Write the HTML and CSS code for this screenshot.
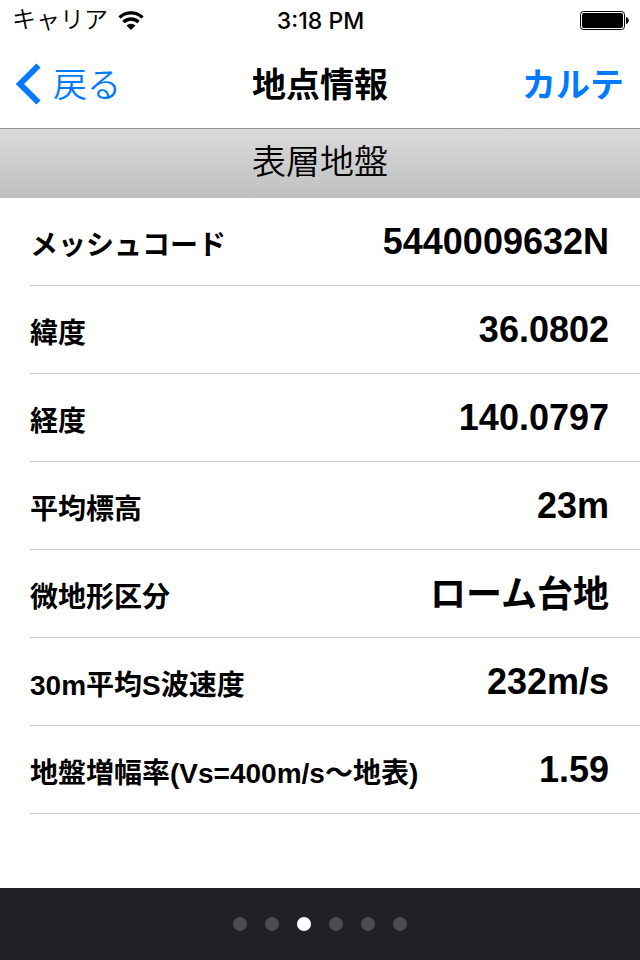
FILE: index.html
```
<!DOCTYPE html>
<html lang="ja">
<head>
  <meta charset="UTF-8">
  <meta name="viewport" content="width=device-width, initial-scale=1">
  <title>地点情報</title>
  <link rel="stylesheet" href="styles.css">
</head>
<body>
  <header class="top">
    <div class="status-bar">
      <div class="carrier">
        <span>キャリア</span>
        <svg class="wifi" viewBox="0 0 26 19" aria-hidden="true">
          <path d="M1.500 6.500a16.500 16.500 0 0 1 23 0M5.500 11a10.800 10.800 0 0 1 15 0" fill="none" stroke="#000" stroke-width="3.400"/>
          <path d="M8.500 14.500a6.400 6.400 0 0 1 9 0L13 19z"/>
        </svg>
      </div>
      <div class="time">3:18 PM</div>
      <svg class="battery" viewBox="0 0 49 19" aria-hidden="true">
        <rect x="0.500" y="0.500" width="44" height="18" rx="3" fill="none" stroke="#000"/>
        <rect x="2" y="2" width="41" height="15" rx="2"/>
        <path d="M46 6a3.600 3.600 0 0 1 0 7z"/>
      </svg>
    </div>
    <nav class="nav-bar">
      <a class="back" href="#">
        <svg class="chevron" viewBox="0 0 25 42" aria-hidden="true">
          <path d="M22.500 2.500L4 21l18.500 18.500" fill="none" stroke="#007aff" stroke-width="6"/>
        </svg>
        <span class="nav-text">戻る</span>
      </a>
      <h1 class="nav-text">地点情報</h1>
      <button class="karte nav-text" type="button">カルテ</button>
    </nav>
  </header>

  <main>
    <h2>表層地盤</h2>
    <dl class="list">
      <div class="row"><dt>メッシュコード</dt><dd>5440009632N</dd></div>
      <div class="row"><dt>緯度</dt><dd>36.0802</dd></div>
      <div class="row"><dt>経度</dt><dd>140.0797</dd></div>
      <div class="row"><dt>平均標高</dt><dd>23m</dd></div>
      <div class="row"><dt>微地形区分</dt><dd class="ja">ローム台地</dd></div>
      <div class="row"><dt>30m平均S波速度</dt><dd>232m/s</dd></div>
      <div class="row"><dt>地盤増幅率(Vs=400m/s〜地表)</dt><dd>1.59</dd></div>
    </dl>
  </main>

  <footer class="pager">
    <span class="dot"></span>
    <span class="dot"></span>
    <span class="dot active"></span>
    <span class="dot"></span>
    <span class="dot"></span>
    <span class="dot"></span>
  </footer>
</body>
</html>
```
FILE: styles.css
```
* {
  box-sizing: border-box;
}
body {
  margin: 0;
  min-height: 100vh;
  display: flex;
  flex-direction: column;
  background: #fff;
  color: #000;
  font-family: "Liberation Sans", "Noto Sans CJK JP", sans-serif;
}
h1, h2, dl, dd {
  margin: 0;
}
.top {
  border-bottom: 1px solid #979797;
}
.status-bar {
  display: grid;
  grid-template-columns: 1fr auto 1fr;
  align-items: center;
  height: 40px;
  padding: 0 11px 0 12px;
}
.carrier {
  display: flex;
  align-items: center;
  gap: 10px;
  font-size: 24px;
  font-weight: 350;
  line-height: 36px;
}
.wifi {
  width: 26px;
  height: 19px;
}
.time {
  padding-top: 2px;
  font-family: Inter, sans-serif;
  font-size: 23px;
  font-weight: 500;
}
.battery {
  justify-self: end;
  width: 49px;
  height: 19px;
}
.nav-bar {
  display: grid;
  grid-template-columns: 1fr auto 1fr;
  align-items: center;
  height: 88px;
  padding: 0 16px;
}
.nav-text {
  padding: 0 0 4px;
}
.back {
  display: flex;
  align-items: center;
  gap: 12px;
  color: #007aff;
  font-size: 34px;
  font-weight: 350;
  text-decoration: none;
}
.chevron {
  width: 25px;
  height: 42px;
}
h1 {
  font-size: 34px;
  font-weight: 600;
}
.karte {
  justify-self: end;
  border: none;
  background: none;
  color: #007aff;
  font: inherit;
  font-size: 34px;
  font-weight: 600;
  cursor: pointer;
}
main {
  flex: 1;
}
h2 {
  height: 69px;
  background: linear-gradient(#dadada, #c0c0c0);
  font-size: 34px;
  font-weight: 350;
  line-height: 66px;
  text-align: center;
}
.list {
  padding-left: 30px;
}
.row {
  display: flex;
  justify-content: space-between;
  align-items: center;
  height: 88px;
  padding-right: 31px;
  border-bottom: 1px solid #c8c7cc;
  white-space: nowrap;
}
dt {
  padding-top: 2px;
  font-size: 28px;
  font-weight: 600;
}
dd {
  font-size: 36px;
  font-weight: 600;
}
.ja {
  padding-bottom: 6px;
}
.pager {
  display: flex;
  justify-content: center;
  align-items: center;
  gap: 18px;
  height: 72px;
  background: #202124;
}
.dot {
  width: 14px;
  height: 14px;
  border-radius: 50%;
  background: #4d4d50;
}
.dot.active {
  background: #fff;
}
```
